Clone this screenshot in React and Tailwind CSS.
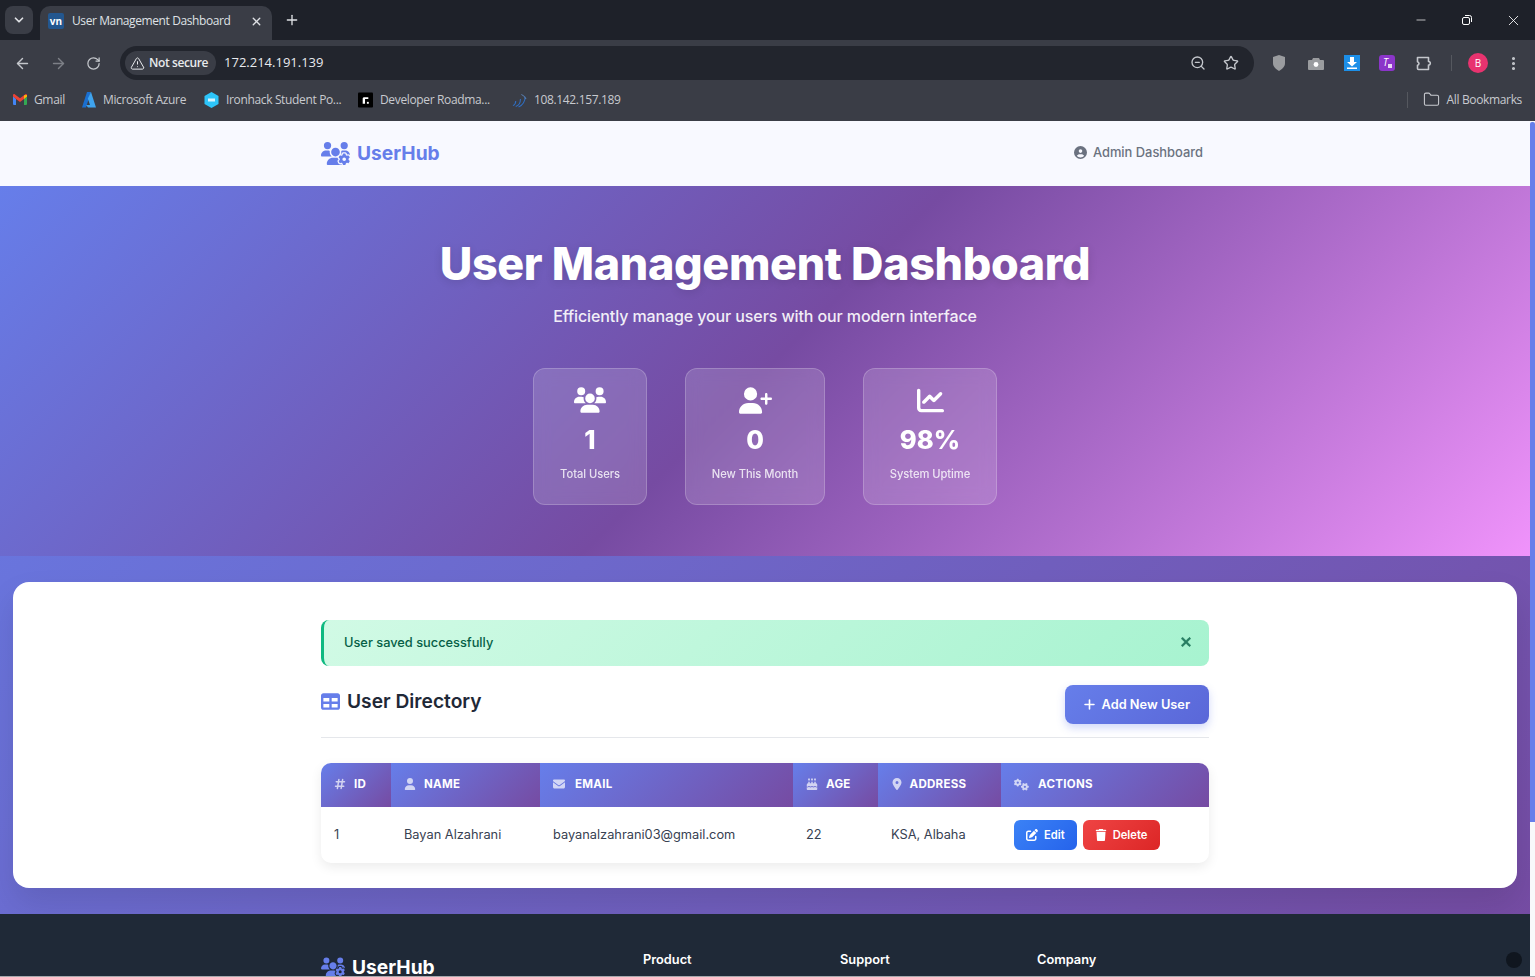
import { ArrowLeft, ArrowRight, RotateCw, TriangleAlert, ZoomOut, Star, EllipsisVertical, Folder, ChevronDown, X, Plus, Minus } from "lucide-react";
import {
  FaUsersGear, FaCircleUser, FaUsers, FaUserPlus, FaChartLine, FaXmark, FaTable, FaPlus,
  FaHashtag, FaUser, FaEnvelope, FaCakeCandles, FaLocationDot, FaGears, FaPenToSquare, FaTrash,
} from "react-icons/fa6";

function GmailIcon() {
  return (
    <svg width="14" height="11" viewBox="0 0 14 11">
      <path d="M0 2v8a1 1 0 0 0 1 1h2V5z" fill="#4285f4" />
      <path d="M14 2v8a1 1 0 0 1-1 1h-2V5z" fill="#34a853" />
      <path d="M3 5 0 2.5V1.4C0 .3 1.2-.3 2 .4L7 4.2 12 .4c.8-.7 2-.1 2 1v1.1L11 5 7 8z" fill="#ea4335" />
      <path d="M11 1.2 14 1v1.5L11 5z" fill="#fbbc04" />
    </svg>
  );
}

function AzureIcon() {
  return (
    <svg width="14" height="16" viewBox="0 0 14 16">
      <path d="M5 0h4L4 15.5H0z" fill="#1a6fd0" />
      <path d="M9 0l5 15.5H6L4 13h4L5.8 6.5z" fill="#3fa4ee" />
    </svg>
  );
}

function IronIcon() {
  return (
    <svg width="15" height="16" viewBox="0 0 14 16">
      <path d="M7 0l7 4v8l-7 4-7-4V4z" fill="#2dc5fa" />
      <rect x="3.5" y="6.5" width="7" height="3" fill="#d5f4ff" />
    </svg>
  );
}

function RoadmapIcon() {
  return (
    <svg width="15" height="16" viewBox="0 0 16 16">
      <rect width="16" height="16" rx="1" fill="#000" />
      <path d="M5 12V6.5C5 5.5 6 5 7 5h4v2H7.5v5z" fill="#fff" />
      <rect x="9.5" y="10" width="2" height="2" fill="#fff" />
    </svg>
  );
}

function SignalIcon() {
  return (
    <svg width="15" height="16" viewBox="0 0 16 16" fill="none" stroke="#2f6fc4" strokeWidth="1.1">
      <path d="M1 14c2-1 3-3 3-5" />
      <path d="M4 15c3-1 5-4 5-8" />
      <path d="M7 15.5c4-2 7-6 7-11" />
      <path d="M10 2c2 1 4 3 5 5" stroke="#5a7fb0" />
    </svg>
  );
}

const bookmarks = [
  { label: "Gmail", icon: <GmailIcon />, width: "w-[69px]" },
  { label: "Microsoft Azure", icon: <AzureIcon />, width: "w-[122px]" },
  { label: "Ironhack Student Po...", icon: <IronIcon />, width: "w-[154px]" },
  { label: "Developer Roadma...", icon: <RoadmapIcon />, width: "w-[154px]" },
  { label: "108.142.157.189", icon: <SignalIcon />, width: "w-[110px]" },
];

function BrowserChrome() {
  return (
    <div className="bg-[#3a3d46] font-['Open_Sans',sans-serif] text-[#dfe1e5]">
      <div className="flex h-10 items-center bg-[#1e2129] pl-[5px]">
        <div className="flex h-[28px] w-[28px] items-center justify-center rounded-lg bg-[#3a3d46]">
          <ChevronDown size={14} strokeWidth={3} />
        </div>
        <div className="ml-[7px] mt-[6px] flex h-[34px] w-[232px] items-center rounded-t-[10px] bg-[#3a3d46] pb-[4px] pl-[8px] pr-[9px]">
          <span className="flex h-4 w-4 items-center justify-center rounded-[2px] bg-[#23578f] text-[10px] font-bold leading-none text-white">vn</span>
          <span className="ml-2 flex-1 whitespace-nowrap text-[12px] tracking-[-0.4px]">User Management Dashboard</span>
          <X size={13} strokeWidth={2.5} />
        </div>
        <Plus size={16} strokeWidth={2} className="ml-[12px]" />
        <div className="flex-1" />
        <div className="-mr-px flex items-center text-white">
          <div className="flex w-[46px] justify-center"><Minus size={14} strokeWidth={1.2} /></div>
          <div className="flex w-[46px] justify-center">
            <svg width="10" height="10" viewBox="0 0 10 10" fill="none" stroke="#fff">
              <rect x="0.5" y="2.5" width="7" height="7" rx="1.5" />
              <path d="M3 .5h4.5a2 2 0 0 1 2 2V7" />
            </svg>
          </div>
          <div className="flex w-[46px] justify-center"><X size={17} strokeWidth={1.2} /></div>
        </div>
      </div>

      <div className="flex h-10 items-center pl-[14px] pr-[12px] pt-[6px]">
        <ArrowLeft size={17} strokeWidth={2} className="text-[#c4c7cc]" />
        <ArrowRight size={17} strokeWidth={2} className="ml-[19px] text-[#7d8087]" />
        <RotateCw size={15} strokeWidth={2} className="ml-[19px] text-[#c4c7cc]" />
        <div className="ml-[19px] flex h-[34px] w-[1134px] items-center rounded-full bg-[#22252d] pl-[5px] pr-[15px]">
          <div className="flex h-6 items-center gap-[4px] rounded-full bg-[#3a3d46] pl-[5px] pr-[8px] text-[12px] font-semibold tracking-[-0.4px] text-[#e8eaed]">
            <TriangleAlert size={15} strokeWidth={1.6} />
            Not secure
          </div>
          <span className="ml-[8px] text-[13px] text-[#e8eaed]">172.214.191.139</span>
          <div className="flex-1" />
          <ZoomOut size={16} strokeWidth={2} className="text-[#c4c7cc]" />
          <Star size={16} strokeWidth={2} className="ml-[17px] text-[#c4c7cc]" />
        </div>
        <svg className="ml-[18px]" width="14" height="16" viewBox="0 0 14 16"><path d="M7 0l6 2v6c0 4-3 6-6 8-3-2-6-4-6-8V2z" fill="#9a9c9f" /></svg>
        <svg className="ml-[22px]" width="16" height="13" viewBox="0 0 16 13">
          <path d="M1 3h3l1-2h6l1 2h3a1 1 0 0 1 1 1v8a1 1 0 0 1-1 1H1a1 1 0 0 1-1-1V4a1 1 0 0 1 1-1z" fill="#9a9c9f" />
          <circle cx="8" cy="7.5" r="2.4" fill="#fff" />
        </svg>
        <div className="ml-[20px] flex h-4 w-4 items-center justify-center bg-[#1c8fe8]">
          <svg width="10" height="12" viewBox="0 0 10 12" fill="#fff"><path d="M3 0h4v5h3L5 9.5 0 5h3z" /><rect y="10.5" width="10" height="1.5" /></svg>
        </div>
        <div className="relative ml-[19px] flex h-4 w-4 items-center justify-center rounded-[3px] bg-[#8b35c9] pb-[2px] pr-[3px] text-[10px] italic leading-none text-white">
          T
          <span className="absolute bottom-[3px] right-[3px] h-[4px] w-[4px] bg-white/80" />
        </div>
        <svg className="ml-[21px]" width="17" height="17" viewBox="0 0 17 17" fill="none" stroke="#c4c7cc" strokeWidth="1.6" strokeLinejoin="round">
          <path d="M1.5 2.5h11v4a1.8 1.8 0 0 1 0 3.6v4.4h-10a1 1 0 0 1-1-1v-3.2a2 2 0 0 0 1.5-1.8A2 2 0 0 0 1.5 6.7z" />
        </svg>
        <div className="ml-[18px] h-4 w-px bg-[#55585f]" />
        <div className="ml-[16px] flex h-5 w-5 items-center justify-center rounded-full bg-[#e8336f] text-[10px] text-white">B</div>
        <EllipsisVertical size={17} strokeWidth={2.4} className="ml-[17px] text-[#c4c7cc]" />
      </div>

      <div className="flex h-[41px] items-center pb-[2px] pl-[13px] pr-[13px] text-[12px] tracking-[-0.35px] text-[#c8cacf]">
        {bookmarks.map((b) => (
          <div key={b.label} className={`${b.width} flex shrink-0 items-center gap-[7px] whitespace-nowrap`}>
            {b.icon}
            <span>{b.label}</span>
          </div>
        ))}
        <div className="flex-1" />
        <div className="mr-[15px] h-4 w-px bg-[#55585f]" />
        <Folder size={17} strokeWidth={1.5} className="mr-[7px]" />
        <span className="whitespace-nowrap">All Bookmarks</span>
      </div>
    </div>
  );
}

function Stat({ icon, value, label, width }) {
  return (
    <div className={`${width} flex h-[137px] flex-col items-center rounded-xl border border-white/20 bg-white/15 pt-[15px] text-white backdrop-blur-sm`}>
      <div className="flex h-8 items-center">{icon}</div>
      <div className="mt-[5px] text-[25.6px] font-extrabold leading-[38px]">{value}</div>
      <div className="mt-[6px] whitespace-nowrap text-[11.2px] font-medium leading-[18px] tracking-[-0.05px] opacity-80">{label}</div>
    </div>
  );
}

const columns = [
  { label: "ID", icon: <FaHashtag className="text-[12px]" />, width: "w-[70px]", gap: "gap-[8.2px]" },
  { label: "NAME", icon: <FaUser className="text-[12px]" />, width: "w-[149px]", gap: "gap-[8.2px]" },
  { label: "EMAIL", icon: <FaEnvelope className="text-[12px]" />, width: "w-[253px]", gap: "gap-[10.2px]" },
  { label: "AGE", icon: <FaCakeCandles className="text-[12px]" />, width: "w-[85px]", gap: "gap-[8.2px]" },
  { label: "ADDRESS", icon: <FaLocationDot className="text-[12px]" />, width: "w-[123px]", gap: "gap-[6.7px]" },
  { label: "ACTIONS", icon: <FaGears className="text-[15px]" />, width: "w-[208px]", gap: "gap-[9.2px]" },
];

function UserTable() {
  return (
    <div className="mt-[25px] overflow-hidden rounded-[10px] bg-white shadow-[0_4px_12px_rgba(0,0,0,0.08)]">
      <table className="w-full table-fixed border-collapse text-left text-[12.8px]">
        <thead>
          <tr>
            {columns.map((c) => (
              <th key={c.label} className={`${c.width} h-[44px] bg-[linear-gradient(135deg,#667eea,#764ba2)] px-[12.8px] pb-px text-[11.52px] font-bold tracking-[0.3px] text-white`}>
                <span className={`flex items-center ${c.gap}`}>
                  <span className="opacity-70">{c.icon}</span>
                  {c.label}
                </span>
              </th>
            ))}
          </tr>
        </thead>
        <tbody className="text-[#374151]">
          <tr className="h-[56px]">
            <td className="px-[13px]">1</td>
            <td className="px-[13px]">Bayan Alzahrani</td>
            <td className="px-[13px]">bayanalzahrani03@gmail.com</td>
            <td className="px-[13px]">22</td>
            <td className="px-[13px]">KSA, Albaha</td>
            <td className="px-[13px]">
              <div className="flex gap-[6px]">
                <button className="flex h-[30px] items-center gap-[6px] rounded-md bg-[linear-gradient(135deg,#3b82f6,#2563eb)] px-[12px] text-[11.2px] font-semibold text-white">
                  <FaPenToSquare className="text-[12px]" /> Edit
                </button>
                <button className="flex h-[30px] items-center gap-[6px] rounded-md bg-[linear-gradient(135deg,#ef4444,#dc2626)] pl-[12px] pr-[13px] text-[11.2px] font-semibold text-white">
                  <FaTrash className="text-[12px]" /> Delete
                </button>
              </div>
            </td>
          </tr>
        </tbody>
      </table>
    </div>
  );
}

function App() {
  return (
    <div className="flex h-[977px] flex-col overflow-hidden font-['Inter',sans-serif]">
      <BrowserChrome />
      <div className="relative flex min-h-0 flex-1">
        <div className="min-w-0 flex-1 overflow-hidden bg-[linear-gradient(135deg,#667eea,#764ba2)]">
          <nav className="h-[65px] bg-[#f8f9ff]">
            <div className="mx-auto flex h-full w-[888px] items-center justify-between pb-[2px]">
              <div className="mt-[2px] flex items-center gap-[7px] text-[19.2px] font-bold text-[#667eea]">
                <FaUsersGear className="text-[29px]" /> UserHub
              </div>
              <div className="mr-[6px] flex items-center gap-[6px] text-[12.9px] font-medium text-[#6b7280]">
                <FaCircleUser className="text-[13px]" /> Admin Dashboard
              </div>
            </div>
          </nav>

          <section className="flex h-[370px] flex-col items-center bg-[linear-gradient(135deg,#667eea_0%,#764ba2_50%,#f093fb_100%)] pt-[48px] text-white">
            <h1 className="text-[44.8px] font-extrabold leading-[60px] tracking-[-0.32px] [text-shadow:0_2px_10px_rgba(0,0,0,0.12)]">User Management Dashboard</h1>
            <p className="mt-[9px] text-[16px] font-medium leading-[27px] tracking-[-0.11px] opacity-90">Efficiently manage your users with our modern interface</p>
            <div className="mt-[38px] flex gap-[38px]">
              <Stat width="w-[114px]" icon={<FaUsers className="text-[32px]" />} value="1" label="Total Users" />
              <Stat width="w-[140px]" icon={<FaUserPlus className="text-[33px]" />} value="0" label="New This Month" />
              <Stat width="w-[134px]" icon={<FaChartLine className="text-[27px]" />} value="98%" label="System Uptime" />
            </div>
          </section>

          <main className="px-[13px] py-[26px]">
            <div className="h-[306px] rounded-2xl bg-white pt-[38px] shadow-[0_16px_32px_rgba(0,0,0,0.1)]">
              <div className="mx-auto w-[888px]">
                <div className="flex h-[46px] items-center justify-between rounded-lg border-l-[3px] border-[#10b981] bg-[linear-gradient(135deg,#d1fae5,#a7f3d0)] pl-[20px] pr-[16px] text-[12.8px] font-medium text-[#065f46]">
                  User saved successfully
                  <FaXmark className="mb-[3px] text-[14px] opacity-80" stroke="currentColor" strokeWidth={30} />
                </div>
                <div className="mt-[19px] flex items-start justify-between border-b border-[#e5e7eb] pb-[13px]">
                  <h2 className="flex items-center gap-[7px] pt-px text-[19.2px] font-semibold leading-[30px] text-[#1f2937]">
                    <FaTable className="text-[19px] text-[#667eea]" /> User Directory
                  </h2>
                  <button className="flex h-[39px] items-center gap-[6px] rounded-lg bg-[linear-gradient(135deg,#667eea,#5a67d8)] pl-[18px] pr-[19px] text-[12.8px] font-semibold text-white shadow-[0_4px_8px_rgba(102,126,234,0.3)]">
                    <FaPlus className="text-[13px]" /> Add New User
                  </button>
                </div>
                <UserTable />
              </div>
            </div>
          </main>

          <footer className="h-[200px] bg-[#1f2937] text-white">
            <div className="mx-auto flex w-[888px] pt-[36px]">
              <div className="flex w-[322px] items-center gap-[7px] self-start pt-[2px] text-[19.2px] font-bold leading-[30px]">
                <FaUsersGear className="text-[24px] text-[#667eea]" /> UserHub
              </div>
              <div className="w-[197px] text-[12.8px] font-semibold">Product</div>
              <div className="w-[197px] text-[12.8px] font-semibold">Support</div>
              <div className="text-[12.8px] font-semibold">Company</div>
            </div>
          </footer>
        </div>
        <div className="w-[5px] bg-[#f8f9fa]">
          <div className="mt-px h-[700px] rounded-t-[2px] bg-[#667eea]" />
        </div>
        <div className="absolute bottom-[8px] right-[13px] h-4 w-4 rounded-full bg-[#10161f]" />
      </div>
      <div className="h-px bg-[#a5a8ad]" />
    </div>
  );
}

export default App;
